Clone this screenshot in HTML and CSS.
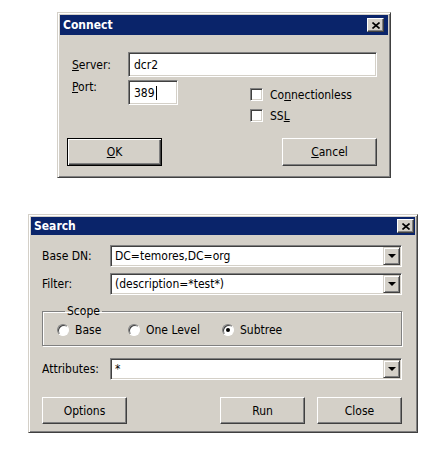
FILE: index.html
```html
<!DOCTYPE html>
<html lang="en">

<head>
  <meta charset="UTF-8">
  <title>Connect / Search</title>
  <link rel="stylesheet" href="styles.css">
</head>

<body>
  <div class="desk">

    <!-- Connect dialog -->
    <div class="window connect">
      <div class="titlebar">
        <span>Connect</span>
        <span class="close"><svg width="8" height="7" viewBox="0 0 8 7"><path d="M0.5 0.5 L7.5 6.5 M7.5 0.5 L0.5 6.5" stroke="#000" stroke-width="1.6" fill="none"/></svg></span>
      </div>
      <div class="body connect-body">
        <div class="row">
          <span class="label"><u>S</u>erver:</span>
          <span class="field grow">dcr2</span>
        </div>
        <div class="row port-row">
          <span class="label"><u>P</u>ort:</span>
          <span class="field port">389<i class="caret"></i></span>
          <div class="checks">
            <div class="check"><span class="box"></span><span>Co<u>n</u>nectionless</span></div>
            <div class="check"><span class="box"></span><span>SS<u>L</u></span></div>
          </div>
        </div>
        <div class="buttons">
          <span class="btn default"><span><u>O</u>K</span></span>
          <span class="btn"><span><u>C</u>ancel</span></span>
        </div>
      </div>
    </div>

    <!-- Search dialog -->
    <div class="window search">
      <div class="titlebar small">
        <span>Search</span>
        <span class="close"><svg width="8" height="7" viewBox="0 0 8 7"><path d="M0.5 0.5 L7.5 6.5 M7.5 0.5 L0.5 6.5" stroke="#000" stroke-width="1.6" fill="none"/></svg></span>
      </div>
      <div class="body search-body">
        <div class="row">
          <span class="label wide">Base DN:</span>
          <span class="field combo grow"><span class="text">DC=temores,DC=org</span><span class="drop"><i></i></span></span>
        </div>
        <div class="row gap6">
          <span class="label wide">Filter:</span>
          <span class="field combo grow"><span class="text">(description=*test*)</span><span class="drop"><i></i></span></span>
        </div>
        <fieldset class="group">
          <legend>Scope</legend>
          <div class="radios">
            <span class="radio base"><span class="dot"></span>Base</span>
            <span class="radio level"><span class="dot"></span>One Level</span>
            <span class="radio"><span class="dot on"></span>Subtree</span>
          </div>
        </fieldset>
        <div class="row attr-row">
          <span class="label wide">Attributes:</span>
          <span class="field combo grow"><span class="text">*</span><span class="drop"><i></i></span></span>
        </div>
        <div class="buttons search-buttons">
          <span class="btn">Options</span>
          <span class="spacer"></span>
          <span class="btn">Run</span>
          <span class="btn">Close</span>
        </div>
      </div>
    </div>

  </div>
</body>

</html>
```

FILE: styles.css
```css
body {
  margin: 0;
  background: #fff;
  font: 12px "DejaVu Sans Condensed", "DejaVu Sans", sans-serif;
  font-stretch: condensed;
  color: #000;
}

.desk {
  display: flex;
  flex-direction: column;
  align-items: flex-start;
  padding-top: 12px;
}

/* classic raised window frame */
.window {
  box-sizing: border-box;
  display: flex;
  flex-direction: column;
  background: #d4d0c8;
  border: 1px solid;
  border-color: #d4d0c8 #404040 #404040 #d4d0c8;
  box-shadow: inset 1px 1px #fff, inset -1px -1px #808080;
  padding: 2px;
}

.connect {
  margin-left: 57px;
  width: 334px;
  height: 166px;
}

.search {
  margin-left: 28px;
  margin-top: 36px;
  width: 390px;
  height: 219px;
}

.titlebar {
  height: 20px;
  display: flex;
  align-items: center;
  justify-content: space-between;
  padding: 0 4px 0 3px;
  background: #0a246a;
  color: #fff;
  font-weight: bold;
}

.titlebar.small {
  height: 18px;
  padding-right: 1px;
}

.close {
  width: 17px;
  height: 14px;
  box-sizing: border-box;
  display: flex;
  align-items: center;
  justify-content: center;
  background: #d4d0c8;
  border: 1px solid;
  border-color: #fff #404040 #404040 #fff;
  box-shadow: inset -1px -1px #808080;
}

.row {
  display: flex;
  align-items: center;
}

.label {
  width: 56px;
  padding-left: 5px;
  flex: none;
}

.label.wide {
  width: 68px;
  padding-left: 0;
}

/* sunken white field */
.field {
  box-sizing: border-box;
  height: 25px;
  display: flex;
  align-items: center;
  padding: 0 5px;
  background: #fff;
  border: 1px solid;
  border-color: #808080 #fff #fff #808080;
  box-shadow: inset 1px 1px #404040, inset -1px -1px #d4d0c8;
}

.grow {
  flex: 1;
}

.caret {
  display: inline-block;
  width: 1px;
  height: 14px;
  margin-left: 1px;
  background: #000;
}

.connect-body {
  padding: 17px 11px 0 7px;
}

.port-row {
  margin-top: 3px;
  align-items: flex-start;
}

.port {
  width: 50px;
}

.checks {
  margin-left: 72px;
  margin-top: 4px;
}

.check {
  height: 21px;
  display: flex;
  align-items: center;
  gap: 7px;
}

.box {
  width: 13px;
  height: 13px;
  box-sizing: border-box;
  background: #fff;
  border: 1px solid;
  border-color: #808080 #fff #fff #808080;
  box-shadow: inset 1px 1px #404040, inset -1px -1px #d4d0c8;
}

.buttons {
  display: flex;
  justify-content: space-between;
  margin-top: 12px;
}

.btn {
  box-sizing: border-box;
  width: 95px;
  height: 28px;
  display: flex;
  align-items: center;
  justify-content: center;
  background: #d4d0c8;
  border: 1px solid;
  border-color: #fff #404040 #404040 #fff;
  box-shadow: inset -1px -1px #808080;
}

.btn.default {
  border: 1px solid #000;
  box-shadow: inset 1px 1px #fff, inset -1px -1px #404040, inset -2px -2px #808080;
}

/* search dialog */
.search-body {
  padding: 10px 13px 0 11px;
}

.combo {
  height: 22px;
  padding: 0 1px 0 4px;
}

.combo .text {
  flex: 1;
}

.drop {
  width: 17px;
  height: 18px;
  box-sizing: border-box;
  display: flex;
  align-items: center;
  justify-content: center;
  background: #d4d0c8;
  border: 1px solid;
  border-color: #d4d0c8 #404040 #404040 #d4d0c8;
  box-shadow: inset 1px 1px #fff, inset -1px -1px #808080;
}

.drop i {
  width: 0;
  height: 0;
  border-left: 4px solid transparent;
  border-right: 4px solid transparent;
  border-top: 4px solid #000;
}

.gap6 {
  margin-top: 6px;
}

.group {
  margin: 9px 0 0;
  padding: 5px 0 0 14px;
  height: 42px;
  box-sizing: border-box;
  border: 1px solid #808080;
  box-shadow: 1px 1px 0 #fff, inset 1px 1px 0 #fff;
}

.group legend {
  padding: 0 2px;
  margin-left: 8px;
}

.radios {
  display: flex;
  align-items: center;
}

.radio {
  display: flex;
  align-items: center;
  gap: 6px;
}

.radio.base {
  width: 71px;
}

.radio.level {
  width: 94px;
}

.dot {
  width: 12px;
  height: 12px;
  box-sizing: border-box;
  border-radius: 50%;
  background: #fff;
  border: 1px solid;
  border-color: #808080 #fff #fff #808080;
  box-shadow: inset 1px 1px #404040;
  display: flex;
  align-items: center;
  justify-content: center;
}

.dot.on::after {
  content: "";
  width: 4px;
  height: 4px;
  border-radius: 50%;
  background: #000;
}

.attr-row {
  margin-top: 12px;
}

.search-buttons {
  margin-top: 17px;
  gap: 12px;
  justify-content: flex-start;
}

.search-buttons .btn {
  width: 85px;
  height: 27px;
}

.spacer {
  flex: 1;
}
```
